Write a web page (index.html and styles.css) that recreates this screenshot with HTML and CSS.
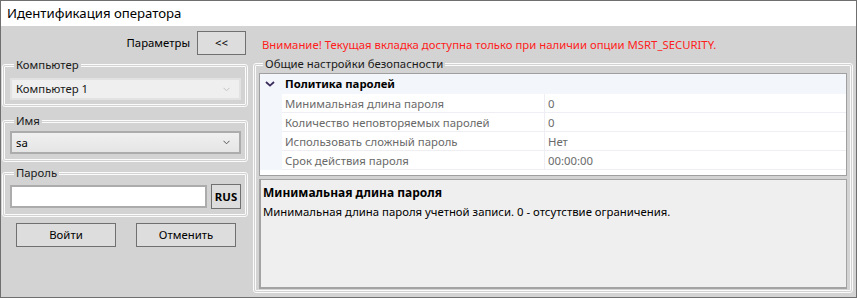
FILE: index.html
```html
<!DOCTYPE html>
<html lang="ru">
<head>
<meta charset="utf-8">
<title>Идентификация оператора</title>
<link rel="stylesheet" href="styles.css">
</head>
<body>
<div class="window">
  <div class="titlebar">Идентификация оператора</div>
  <div class="client">
    <div class="params-row">
      <span class="params-label">Параметры</span>
      <button class="btn btn-collapse">&lt;&lt;</button>
    </div>
    <div class="warning">Внимание! Текущая вкладка доступна только при наличии опции MSRT_SECURITY.</div>

    <div class="left">
      <fieldset class="group g-computer">
        <legend>Компьютер</legend>
        <div class="combo disabled">
          <span>Компьютер 1</span>
          <svg class="chev" width="7" height="5" viewBox="0 0 7 5"><polyline points="0.5,0.8 3.5,3.8 6.5,0.8" fill="none" stroke="currentColor" stroke-width="1"/></svg>
        </div>
      </fieldset>

      <fieldset class="group g-name">
        <legend>Имя</legend>
        <div class="combo">
          <span>sa</span>
          <svg class="chev" width="7" height="5" viewBox="0 0 7 5"><polyline points="0.5,0.8 3.5,3.8 6.5,0.8" fill="none" stroke="currentColor" stroke-width="1"/></svg>
        </div>
      </fieldset>

      <fieldset class="group g-pass">
        <legend>Пароль</legend>
        <div class="pass-row">
          <div class="textbox"></div>
          <button class="btn btn-lang">RUS</button>
        </div>
      </fieldset>

      <div class="actions">
        <button class="btn btn-action">Войти</button>
        <button class="btn btn-action">Отменить</button>
      </div>
    </div>

    <fieldset class="group g-security">
      <legend>Общие настройки безопасности</legend>
      <div class="pgrid">
        <div class="pg-category">
          <svg class="cat-chev" width="10" height="6" viewBox="0 0 10 6"><polyline points="1,1 5,4.6 9,1" fill="none" stroke="currentColor" stroke-width="1.8"/></svg>
          <span>Политика паролей</span>
        </div>
        <div class="pg-row"><div class="pg-gutter"></div><div class="pg-name">Минимальная длина пароля</div><div class="pg-value">0</div></div>
        <div class="pg-row"><div class="pg-gutter"></div><div class="pg-name">Количество неповторяемых паролей</div><div class="pg-value">0</div></div>
        <div class="pg-row"><div class="pg-gutter"></div><div class="pg-name">Использовать сложный пароль</div><div class="pg-value">Нет</div></div>
        <div class="pg-row"><div class="pg-gutter"></div><div class="pg-name">Срок действия пароля</div><div class="pg-value">00:00:00</div></div>
      </div>
      <div class="desc">
        <div class="desc-title">Минимальная длина пароля</div>
        <div class="desc-text">Минимальная длина пароля учетной записи. 0 - отсутствие ограничения.</div>
      </div>
    </fieldset>
  </div>
</div>
</body>
</html>
```

FILE: styles.css
```css
* { box-sizing: border-box; }

html, body {
  margin: 0;
  padding: 0;
  background: #d3d3d3;
}

body {
  font-family: "Noto Sans", "Liberation Sans", sans-serif;
  font-size: 11.35px;
  line-height: 16px;
  color: #000;
}

.window {
  width: 857px;
  height: 298px;
  border: 1px solid #6f6f6f;
  display: flex;
  flex-direction: column;
  background: #d3d3d3;
}

.titlebar {
  height: 25px;
  background: #fff;
  padding: 4px 0 0 6px;
  font-size: 13.2px;
  line-height: 17px;
  flex: none;
}

.client {
  flex: 1;
  display: grid;
  grid-template-columns: 246px 600px;
  grid-template-rows: 30px 1fr;
  column-gap: 5px;
  padding: 0 3px 4px 1px;
}

.params-row {
  display: flex;
  justify-content: flex-end;
  align-items: center;
  gap: 7px;
  padding: 5px 2px 0 0;
  height: 29px;
}

.warning {
  color: #ff1c1c;
  padding: 11px 0 0 9px;
  white-space: nowrap;
}

.btn {
  font-family: inherit;
  font-size: 11.35px;
  line-height: 16px;
  color: #000;
  background: #dddddd;
  border: 1px solid #707070;
  padding: 0;
  margin: 0;
}

.btn-collapse {
  width: 49px;
  height: 24px;
}

.left {
  display: flex;
  flex-direction: column;
  padding-top: 1px;
}

.group {
  margin: 0;
  border: 3px double #fbfbfb;
  border-radius: 3px;
  min-width: 0;
}

.group legend {
  padding: 0 2px;
  margin-left: 4px;
  line-height: 16px;
  color: #1a1a1a;
}

.g-computer { padding: 5px 4px 4px 5px; }
.g-name { padding: 2px 4px 5px 5px; margin-top: 6px; }
.g-pass { padding: 3px 4px 5px 5px; margin-top: 3px; }

.combo {
  height: 22px;
  display: flex;
  align-items: center;
  justify-content: space-between;
  padding: 0 9px 0 4px;
  border: 2px solid #acacac;
  background: linear-gradient(#f0f0f0, #e5e5e5);
}

.g-name .combo { height: 23px; }

.combo.disabled {
  border-color: #e2e2e2;
  background: #efefef;
  color: #1a1a1a;
}

.chev { color: #555; display: block; }
.combo.disabled .chev { color: #c4c4c4; }

.pass-row {
  display: flex;
  align-items: center;
  gap: 4px;
  height: 25px;
}

.textbox {
  width: 197px;
  height: 23px;
  background: #fff;
  border: 2px solid #acacac;
}

.btn-lang {
  width: 30px;
  height: 25px;
  font-weight: bold;
}

.actions {
  display: flex;
  gap: 20px;
  padding-left: 14px;
  margin-top: 6px;
}

.btn-action {
  width: 100px;
  height: 24px;
}

.g-security {
  grid-row: 2;
  grid-column: 2;
  padding: 1px 3px 1px 3px;
  display: flex;
  flex-direction: column;
}

.pgrid {
  height: 103px;
  background: #fff;
  border: 1px solid #9f9f9f;
  flex: none;
}

.pg-category {
  height: 20px;
  background: #f3f6fb;
  display: flex;
  align-items: center;
  font-weight: bold;
}

.cat-chev {
  color: #3a2c5c;
  margin: 0 10px 0 5px;
  display: block;
}

.pg-row {
  height: 19px;
  display: grid;
  grid-template-columns: 22px 263px 1fr;
  color: #6a6a6a;
}

.pg-gutter { background: #f3f6fb; }

.pg-name {
  padding: 2px 0 0 3px;
  border-bottom: 1px solid #eeeef4;
  border-right: 1px solid #eeeef4;
  white-space: nowrap;
}

.pg-value {
  padding: 2px 0 0 3px;
  border-bottom: 1px solid #eeeef4;
}

.desc {
  flex: 1;
  margin-top: 3px;
  background: #efefef;
  border: 2px solid #a3a3a3;
  border-width: 1px 1px 2px 2px;
  padding: 4px 0 0 2px;
}

.desc-title {
  font-weight: bold;
  font-size: 12px;
  line-height: 18px;
  height: 20px;
}
```
